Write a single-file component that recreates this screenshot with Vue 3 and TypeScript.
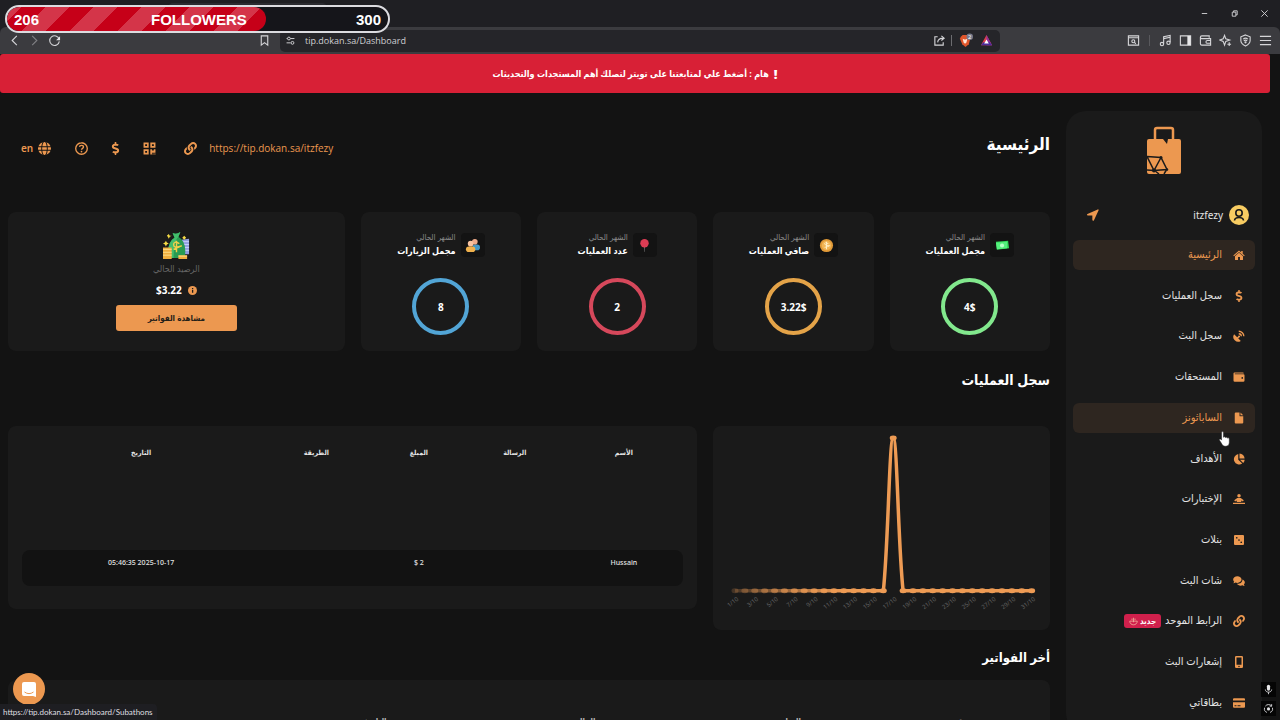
<script setup lang="ts">
interface Icon {
  box: string
  fill?: string
  line?: string
  width?: number
}

const icons: Record<string, Icon> = {
  link: {
    box: '0 0 512 512',
    fill: 'M326.612 185.391c59.747 59.809 58.927 155.698.36 214.59-.11.12-.24.25-.36.37l-67.2 67.2c-59.27 59.27-155.699 59.262-214.96 0-59.27-59.26-59.27-155.7 0-214.96l37.106-37.106c9.84-9.84 26.786-3.3 27.294 10.606.648 17.722 3.826 35.527 9.69 52.721 1.986 5.822.567 12.262-3.783 16.612l-13.087 13.087c-28.026 28.026-28.905 73.66-1.155 101.96 28.024 28.579 74.086 28.749 102.325.51l67.2-67.19c28.191-28.191 28.073-73.757 0-101.83-3.701-3.694-7.429-6.564-10.341-8.569a16.037 16.037 0 0 1-6.947-12.606c-.396-10.567 3.348-21.456 11.698-29.806l21.054-21.055c5.521-5.521 14.182-6.199 20.584-1.731a152.482 152.482 0 0 1 20.522 17.197zM467.547 44.449c-59.261-59.262-155.69-59.27-214.96 0l-67.2 67.2c-.12.12-.25.25-.36.37-58.566 58.892-59.387 154.781.36 214.59a152.454 152.454 0 0 0 20.521 17.196c6.402 4.468 15.064 3.789 20.584-1.731l21.054-21.055c8.35-8.35 12.094-19.239 11.698-29.806a16.037 16.037 0 0 0-6.947-12.606c-2.912-2.005-6.64-4.875-10.341-8.569-28.073-28.073-28.191-73.639 0-101.83l67.2-67.19c28.239-28.239 74.3-28.069 102.325.51 27.75 28.3 26.872 73.934-1.155 101.96l-13.087 13.087c-4.35 4.35-5.769 10.79-3.783 16.612 5.864 17.194 9.042 34.999 9.69 52.721.509 13.906 17.454 20.446 27.294 10.606l37.106-37.106c59.271-59.259 59.271-155.699.001-214.959z',
  },
  dollar: {
    box: '-112 0 512 512',
    fill: 'M209.2 233.4l-108-31.6C88.7 198.2 80 186.5 80 173.5c0-16.3 13.2-29.5 29.5-29.5h66.3c12.2 0 24.2 3.7 34.2 10.5 6.1 4.1 14.3 3.1 19.5-2l34.8-34c7.1-6.9 6.1-18.4-1.8-24.5C238 74.8 207.4 64.1 176 64V16c0-8.8-7.2-16-16-16h-32c-8.8 0-16 7.2-16 16v48h-2.5C45.8 64-5.4 118.7.5 183.6c4.2 46.1 39.4 83.6 83.8 96.6l102.5 30c12.5 3.7 21.2 15.3 21.2 28.3 0 16.3-13.2 29.5-29.5 29.5h-66.3C100 368 88 364.3 78 357.5c-6.1-4.1-14.3-3.1-19.5 2l-34.8 34c-7.1 6.9-6.1 18.4 1.8 24.5 24.5 19.2 55.1 29.9 86.5 30v48c0 8.8 7.2 16 16 16h32c8.8 0 16-7.2 16-16v-48.2c46.6-.9 90.3-28.6 105.7-72.7 21.5-61.6-14.6-124.8-72.5-141.7z',
  },
  home: {
    box: '0 0 24 24',
    fill: 'M12 7.6 4 14.3V21a1 1 0 0 0 1 1h5v-6h4v6h5a1 1 0 0 0 1-1v-6.7zM.6 12.8 12 3.2l4.4 3.7V4.2h3v5.2l4 3.4-1.4 1.7L12 6 2 14.5z',
  },
  dish: {
    box: '0 0 24 24',
    fill: 'M2.2 8.6a9.6 9.6 0 0 0 13.4 13.2l-5.2-5.2 1.7-1.7a2 2 0 1 0-2-2l-1.7 1.7z',
    line: 'M11.5 7.5a5.4 5.4 0 0 1 5.2 5.2M11.5 2.5a10.3 10.3 0 0 1 10.2 10.2',
    width: 2.6,
  },
  wallet: {
    box: '0 0 24 24',
    fill: 'M3 3h17a1.5 1.5 0 0 1 1.5 1.5V5H3.5v1.4H21A2 2 0 0 1 23 8.5v10.5a2.5 2.5 0 0 1-2.5 2.5h-17A2.5 2.5 0 0 1 1 19V5a2 2 0 0 1 2-2zm15.500 9.200a1.700 1.700 0 1 0 0 3.400 1.700 1.700 0 0 0 0-3.400z',
  },
  file: {
    box: '0 0 24 24',
    fill: 'M5.500 1H13v6.500a1 1 0 0 0 1 1h6.500V21a2 2 0 0 1-2 2h-13a2 2 0 0 1-2-2V3a2 2 0 0 1 2-2zM15 1l5.500 5.700H15z',
  },
  pie: {
    box: '0 0 24 24',
    fill: 'M10.500 2.200v11.300l7.900 7.600A10.500 10.500 0 1 1 10.500 2.200zM13 1a10.300 10.300 0 0 1 10.200 10.200H13zM14 13.500h9.400a10.400 10.400 0 0 1-3 6.500z',
  },
  poll: {
    box: '0 0 24 24',
    fill: 'M12 2a3.500 3.500 0 1 1 0 7 3.500 3.500 0 0 1 0-7zM8.500 10h7l6 4.600-1.600 2.400-3.400-2v3H7.500v-3l-3.400 2-1.600-2.400zM0 19.500h24v2.700H0z',
  },
  dice: {
    box: '0 0 24 24',
    fill: 'M4 2h16a2 2 0 0 1 2 2v16a2 2 0 0 1-2 2H4a2 2 0 0 1-2-2V4a2 2 0 0 1 2-2zm3.500 3.800a1.700 1.700 0 1 0 0 3.400 1.700 1.700 0 0 0 0-3.400zM12 10.300a1.700 1.700 0 1 0 0 3.400 1.700 1.700 0 0 0 0-3.400zm4.500 4.500a1.700 1.700 0 1 0 0 3.400 1.700 1.700 0 0 0 0-3.400z',
  },
  chat: {
    box: '0 0 24 24',
    fill: 'M8.700 2.500c4.700 0 8.400 3 8.400 6.700s-3.700 6.700-8.400 6.700c-1.300 0-2.500-.2-3.600-.7-1.200.8-2.700 1.500-4.700 1.500 1-1 1.700-2.200 1.900-3.200A6.200 6.200 0 0 1 .3 9.200c0-3.700 3.700-6.700 8.400-6.700zM18.800 8.800c2.900.9 4.900 3.200 4.900 5.900 0 1.700-.8 3.200-2 4.300.2 1 .9 2.200 1.900 3.200-2 0-3.500-.7-4.700-1.500-1.100.5-2.300.7-3.600.7-3.300 0-6.100-1.500-7.500-3.700 6.400.3 11.300-3.600 11-8.900z',
  },
  phone: {
    box: '0 0 24 24',
    fill: 'M6.500 0h11a2.500 2.500 0 0 1 2.500 2.500v19a2.500 2.500 0 0 1-2.500 2.500h-11A2.500 2.500 0 0 1 4 21.500v-19A2.500 2.500 0 0 1 6.500 0zM7 3v14.500h10V3zm5 16.300a1.500 1.500 0 1 0 0 3 1.500 1.500 0 0 0 0-3z',
  },
  card: {
    box: '0 0 24 24',
    fill: 'M2 2.500h20a2 2 0 0 1 2 2V7H0V4.500a2 2 0 0 1 2-2zM0 10.500h24v9a2 2 0 0 1-2 2H2a2 2 0 0 1-2-2zm3 6v2.200h4v-2.200zm6 0v2.200h6v-2.200z',
  },
  arrow: {
    box: '0 0 24 24',
    fill: 'M21.500.800.900 9.900c-1.500.8-1 3 .7 3h9.100v9.200c0 1.700 2.300 2.200 3 .7L23.200 2.500c.4-1.200-.6-2.100-1.700-1.700z',
  },
  globe: {
    box: '0 0 24 24',
    fill: 'M8 8c.5-4.300 2-8 4-8s3.500 3.700 4 8zm9.800 0c-.4-3-1.100-5.500-2.300-7.400A12 12 0 0 1 23.200 8zM6.200 8H.8A12 12 0 0 1 8.500.6C7.300 2.500 6.600 5 6.200 8zM.3 9.500h5.800a34 34 0 0 0 0 5H.3a12 12 0 0 1 0-5zm7.500 0h8.400a34 34 0 0 1 0 5H7.800a34 34 0 0 1 0-5zm10.100 0h5.800a12 12 0 0 1 0 5h-5.800a34 34 0 0 0 0-5zM8 16h8c-.5 4.300-2 8-4 8s-3.500-3.700-4-8zm-1.800 0c.4 3 1.100 5.500 2.300 7.400A12 12 0 0 1 .8 16zm11.600 0h5.400a12 12 0 0 1-7.700 7.400c1.200-1.900 1.900-4.400 2.300-7.400z',
  },
  help: {
    box: '0 0 24 24',
    fill: 'M12 16a1.600 1.600 0 1 1 0 3.200 1.600 1.600 0 0 1 0-3.200z',
    line: 'M12 1.300a10.700 10.700 0 1 1 0 21.400 10.700 10.700 0 0 1 0-21.400M8.300 9c.2-2 1.500-2.900 3.700-2.900s3.700 1.200 3.700 3.100c0 2.500-3.500 2.500-3.700 5',
    width: 2.5,
  },
  qr: {
    box: '0 0 24 24',
    fill: 'M1 1h9.500v9.500H1zm3 3v3.500h3.500V4zM13.500 1H23v9.500h-9.500zm3 3v3.500H20V4zM1 13.500h9.500V23H1zm3 3V20h3.500v-3.500zM13.500 13.500h3v2h3.500v-2h3v6.300h-6.500V23h-3zM17.500 21h2v2h-2zm3.500 0h2v2h-2z',
  },
}

const menu = [
  { label: 'الرئيسية', icon: 'home', active: true },
  { label: 'سجل العمليات', icon: 'dollar' },
  { label: 'سجل البث', icon: 'dish' },
  { label: 'المستحقات', icon: 'wallet' },
  { label: 'الساباثونز', icon: 'file', active: true },
  { label: 'الأهداف', icon: 'pie' },
  { label: 'الإختبارات', icon: 'poll' },
  { label: 'بنلات', icon: 'dice' },
  { label: 'شات البث', icon: 'chat' },
  { label: 'الرابط الموحد', icon: 'link', badge: 'جديد' },
  { label: 'إشعارات البث', icon: 'phone' },
  { label: 'بطاقاتي', icon: 'card' },
]

const stats = [
  { title: 'مجمل العمليات', value: '4$', kind: 'green' },
  { title: 'صافي العمليات', value: '3.22$', kind: 'gold' },
  { title: 'عدد العمليات', value: '2', kind: 'red' },
  { title: 'مجمل الزيارات', value: '8', kind: 'blue' },
]

const columns = ['الأسم', 'الرسالة', 'المبلغ', 'الطريقة', 'التاريخ']
const row = ['Hussain', '', '$ 2', '', '05:46:35 2025-10-17']
const invoiceColumns = ['رقم', 'المبلغ', 'الحالة', 'التاريخ', 'خيارات']

const step = 9.9
const points = Array.from({ length: 31 }, (_, i) => ({
  day: i + 1,
  x: 22 + i * step,
  y: i === 16 ? 12 : 165,
}))
const left = points[15].x
const peak = points[16].x
const right = points[17].x
const curve = `M${points[0].x} 165H${left}C${left + 5} 120 ${peak - 4} 12 ${peak} 12S${right - 5} 120 ${right} 165H${points[30].x}`
</script>

<template>
  <div class="window">
    <div class="browser">
      <div class="tabs">
        <div class="tab"><button aria-label="Close tab"><svg viewBox="0 0 10 10"><path d="M2 2l6 6M8 2l-6 6" /></svg></button></div>
        <button class="new-tab" aria-label="New tab"><svg viewBox="0 0 10 10"><path d="M5 1v8M1 5h8" /></svg></button>
        <div class="controls">
          <button aria-label="Minimize"><svg viewBox="0 0 10 10"><path d="M2 5h6" /></svg></button>
          <button aria-label="Restore"><svg viewBox="0 0 10 10"><path d="M2.500 3.500h4v4.500h-4zM4 3.500V2h4v4.500H6.500" /></svg></button>
          <button aria-label="Close"><svg viewBox="0 0 10 10"><path d="M1.500 1.500l7 7M8.500 1.500l-7 7" /></svg></button>
        </div>
      </div>
      <div class="toolbar">
        <div class="nav">
          <button aria-label="Back"><svg viewBox="0 0 14 14"><path d="M9.500 2l-5 5 5 5" /></svg></button>
          <button aria-label="Forward" class="dim"><svg viewBox="0 0 14 14"><path d="M4.500 2l5 5-5 5" /></svg></button>
          <button aria-label="Reload"><svg viewBox="0 0 14 14"><path d="M12 5.500A5.200 5.200 0 1 0 12.200 8" /><path class="solid" d="M13 2.500v4.300H8.700z" /></svg></button>
        </div>
        <button class="bookmark" aria-label="Bookmark"><svg viewBox="0 0 14 14"><path d="M3.500 2h7v10L7 9.300 3.500 12z" /></svg></button>
        <div class="address">
          <svg viewBox="0 0 14 14"><path d="M2 4.500h1M7 4.500h5M2 10h5" /><circle cx="5" cy="4.500" r="1.800" /><circle cx="9.500" cy="10" r="1.800" /></svg>
          <input type="text" value="tip.dokan.sa/Dashboard" aria-label="Address" />
          <div class="address-end">
            <svg viewBox="0 0 14 14"><path d="M5 3H2v9h9V9M5 9c.3-3 2-4.500 6-4.500M9 2l3 2.500L9 7" /></svg>
            <i class="bar"></i>
            <svg viewBox="0 0 16 16" class="shield">
              <path class="lion" d="M3 4l2-2h5l2 2 1 2-1.500 6L8 15l-3.500-3L2 6z" />
              <path class="mane" d="M5 6l2 1 1 0 2-1-1 4-1.500 1.500L6 10z" />
              <circle cx="12.500" cy="4" r="3.500" /><text x="12.500" y="6">2</text>
            </svg>
            <svg viewBox="0 0 14 14" class="bat"><path class="a" d="M7 1L1 12h12z" /><path class="b" d="M7 12h6L7 1z" /><path class="c" d="M1 12h12l-2.500-3h-7z" /><path class="d" d="M7 6l2.500 4.300h-5z" /></svg>
          </div>
        </div>
        <div class="extras">
          <svg viewBox="0 0 14 14"><path d="M1.500 2h11v10h-11zM1.500 4h11" /><circle cx="6.800" cy="7.800" r="1.600" /><path d="M8 9l1.500 1.500" /></svg>
          <i class="bar dark"></i>
          <svg viewBox="0 0 14 14"><path d="M5 10.500V3l7-1.500V9M5 5l7-1.500" /><circle cx="3.200" cy="10.800" r="1.800" /><circle cx="10.200" cy="9.500" r="1.800" /></svg>
          <svg viewBox="0 0 14 14"><path d="M1.500 2h11v10h-11z" /><path class="solid" d="M9 2h3.500v10H9z" /></svg>
          <svg viewBox="0 0 14 14"><path d="M11 4V2H3a1.500 1.500 0 0 0 0 3h9.500v7H3a1.500 1.500 0 0 1-1.500-1.500v-7M12.500 7H9a1.500 1.500 0 0 0 0 3h3.500" /></svg>
          <svg viewBox="0 0 14 14"><path d="M6 1.500l1.300 3.700L11.500 6.500 7.300 8 6 12 4.500 8 1 6.500l3.500-1.300zM11 9v4M9 11h4" /></svg>
          <svg viewBox="0 0 14 14"><path d="M7 1l5 2v4c0 3-2 4.500-5 6-3-1.500-5-3-5-6V3zM4.500 5.500q2.500-2 5 0M5.200 7.300q1.800-1.300 3.600 0" /><circle cx="7" cy="9" r=".6" /></svg>
          <svg viewBox="0 0 14 14" class="menu"><path d="M1 2.500h12M1 7h12M1 11.500h12" /></svg>
        </div>
      </div>
    </div>

    <div class="page" dir="rtl">
      <a href="#" class="banner"><b>!</b> هام : أضغط علي لمتابعتنا على تويتر لتصلك أهم المستجدات والتحديثات</a>
      <div class="layout">
        <aside class="sidebar">
          <svg class="logo" viewBox="0 0 34 48">
            <path d="M8 14V4a2 2 0 0 1 2-2h14a2 2 0 0 1 2 2v10" class="handle" />
            <path d="M2 13h14l4 5 1-5h11a2 2 0 0 1 2 2v31a2 2 0 0 1-2 2H2a2 2 0 0 1-2-2V15a2 2 0 0 1 2-2z" />
            <path class="net" d="M0 30.500l14 1 6 12-13 1zM14 31.500L7 44.500 0 44M7 44l5 4M20 43l-3 5" />
            <circle cx="14" cy="31.500" r="1.500" /><circle cx="7" cy="44.500" r="2" /><circle cx="20" cy="43.500" r="1.200" />
          </svg>
          <div class="profile">
            <svg class="avatar" viewBox="0 0 20 20"><circle cx="10" cy="10" r="10" /><circle class="o" cx="10" cy="8" r="3.200" /><path class="o" d="M5.500 15.500c.5-4 8.500-4 9 0" /></svg>
            <span>itzfezy</span>
            <svg class="icon" viewBox="0 0 24 24"><path :d="icons.arrow.fill" /></svg>
          </div>
          <nav>
            <a v-for="item in menu" :key="item.label" href="#" :class="{ active: item.active }">
              <svg class="icon" :viewBox="icons[item.icon].box">
                <path fill-rule="evenodd" :d="icons[item.icon].fill" />
                <path v-if="icons[item.icon].line" class="line" :d="icons[item.icon].line" :stroke-width="icons[item.icon].width" />
              </svg>
              <span>{{ item.label }}</span>
              <em v-if="item.badge">{{ item.badge }}<svg viewBox="0 0 12 12"><path d="M1 5.500c0 6.500 10 6.500 10 0zM4 4V2M6 7V1M8 4V2" /></svg></em>
            </a>
          </nav>
        </aside>

        <main>
          <header>
            <h1>الرئيسية</h1>
            <div class="tools" dir="ltr">
              <button class="lang">en <svg class="icon" viewBox="0 0 24 24"><path :d="icons.globe.fill" /></svg></button>
              <button aria-label="Help"><svg class="icon" viewBox="0 0 24 24"><path :d="icons.help.fill" /><path class="line" :d="icons.help.line" :stroke-width="icons.help.width" /></svg></button>
              <button aria-label="Currency"><svg class="icon" :viewBox="icons.dollar.box"><path :d="icons.dollar.fill" /></svg></button>
              <button aria-label="QR code"><svg class="icon" viewBox="0 0 24 24"><path fill-rule="evenodd" :d="icons.qr.fill" /></svg></button>
              <a href="#"><svg class="icon" viewBox="0 0 512 512"><path :d="icons.link.fill" /></svg><span>https://tip.dokan.sa/itzfezy</span></a>
            </div>
          </header>

          <section class="cards">
            <article v-for="s in stats" :key="s.title" class="card stat" :class="s.kind">
              <div class="stat-head">
                <div class="tile">
                  <svg v-if="s.kind === 'green'" viewBox="0 0 16 16"><path fill="#2fd657" d="M1 4l13-1 1 8-13 1.500z" /><path fill="#54ef7c" d="M1 5l12-1v7l-11 1z" /><circle cx="7.500" cy="8" r="2.200" fill="#b4ffc5" /></svg>
                  <svg v-else-if="s.kind === 'gold'" viewBox="0 0 16 16"><circle cx="8" cy="8" r="7" fill="#e19a38" /><circle cx="8" cy="8" r="5" fill="#f2b555" /><path d="M10 6q-4-2-4 0t4 2-4 2M8 4v8" fill="none" stroke="#fff0c9" /></svg>
                  <svg v-else-if="s.kind === 'red'" viewBox="0 0 16 16"><path d="M7.500 9h1l-.3 6h-.4z" fill="#777" /><circle cx="8" cy="5.500" r="4.500" fill="#dc3c54" /></svg>
                  <svg v-else viewBox="0 0 16 16"><rect x="8" y="7" width="8" height="6" rx="3" fill="#4398c6" /><circle cx="10.500" cy="4" r="3" fill="#efab8a" /><circle cx="6" cy="6" r="3" fill="#f8c3a0" /><rect x="1" y="9" width="10" height="6" rx="3" fill="#f0b14d" /></svg>
                </div>
                <div>
                  <p>الشهر الحالي</p>
                  <h3>{{ s.title }}</h3>
                </div>
              </div>
              <div class="ring" dir="ltr">{{ s.value }}</div>
            </article>
            <article class="card balance">
              <svg viewBox="0 0 28 28">
                <path fill="#8f9de0" d="M19 8l8-1v16h-8z" /><path stroke="#c9d2fa" d="M21 10h6M21 13h6M21 16h6M21 19h6" />
                <path fill="#289b52" d="M10 1q4 2 8-1l-2 5q8 5 7 17 0 5-3 5H9q-5 0-4-6Q6 9 12 6z" /><path fill="#42bd6c" d="M10 1q4 2 8-1l-2 5q-5 4-5 22H9q-5 0-4-6Q6 9 12 6z" />
                <path d="M17 12q-6-3-6 1t6 2-6 3M14 9v12" fill="none" stroke="#f0cf4a" stroke-width="1.500" />
                <path fill="#f0ad3d" d="M0 16h9v12H0zM16 24h9v4h-9z" /><path stroke="#ffe08a" d="M0 18h9M0 21h9M0 24h9M16 25h9" />
                <path fill="#f5da45" d="M3 9l1 2 2 1-2 1-1 2-1-2-2-1 2-1zM6 2l1 2 2 0-2 1-1 2-1-2-1-1zM22 4l1 1 1 1-1 1-1 1-1-1-1-1z" />
              </svg>
              <p>الرصيد الحالي</p>
              <strong dir="ltr">$3.22 <svg viewBox="0 0 12 12"><circle cx="6" cy="6" r="6" /><path d="M5.300 5H7v4H5.300zM5.300 2.500H7v1.400H5.300z" /></svg></strong>
              <button>مشاهدة الفواتير</button>
            </article>
          </section>

          <h2>سجل العمليات</h2>

          <section class="cards logs">
            <article class="card chart" dir="ltr">
              <svg viewBox="0 0 337 204">
                <defs>
                  <linearGradient id="fade" gradientUnits="userSpaceOnUse" x1="14" y1="0" x2="130" y2="0">
                    <stop offset="0" stop-color="#ee9b54" stop-opacity=".15" />
                    <stop offset="1" stop-color="#ee9b54" />
                  </linearGradient>
                </defs>
                <path :d="curve" fill="none" stroke="url(#fade)" stroke-width="3.500" />
                <ellipse v-for="p in points" :key="p.day" :cx="p.x" :cy="p.y" rx="3.500" ry="2.500" fill="url(#fade)" />
                <template v-for="p in points" :key="p.day">
                  <text v-if="p.day % 2" text-anchor="end" :transform="`translate(${p.x + 4} 174) rotate(-38)`">{{ p.day }}/10</text>
                </template>
              </svg>
            </article>
            <article class="card ledger">
              <table>
                <colgroup><col class="c1" /><col class="c2" /><col class="c3" /><col class="c4" /><col class="c5" /></colgroup>
                <thead><tr><th v-for="c in columns" :key="c">{{ c }}</th></tr></thead>
                <tbody><tr><td v-for="(c, i) in row" :key="i"><span dir="ltr">{{ c }}</span></td></tr></tbody>
              </table>
            </article>
          </section>

          <h2 class="invoices-title">أخر الفواتير</h2>
          <section class="card invoices">
            <table>
              <colgroup><col class="n1" /><col class="n2" /><col class="n3" /><col class="n4" /><col class="n5" /></colgroup>
              <thead><tr><th v-for="c in invoiceColumns" :key="c">{{ c }}</th></tr></thead>
            </table>
          </section>
        </main>
      </div>
    </div>

    <div class="followers">
      <div class="progress"></div>
      <span>206</span><span class="caption">FOLLOWERS</span><span>300</span>
    </div>
    <button class="messenger" aria-label="Chat"><svg viewBox="0 0 16 16"><path d="M3 1h10a2 2 0 0 1 2 2v13l-3-1H3a2 2 0 0 1-2-2V3a2 2 0 0 1 2-2z" /><path class="smile" d="M3.500 11q4.500 3.300 9 0" /></svg></button>
    <div class="status">https://tip.dokan.sa/Dashboard/Subathons</div>
    <svg class="cursor" viewBox="0 0 14 18"><path d="M3 1.500c0-1.500 2.200-1.500 2.200 0V7c.5-1 2.300-.8 2.300.4.600-.9 2.200-.6 2.200.600.700-.7 2.300-.3 2.300 1V13c0 3-1.800 4.500-4.500 4.500-3 0-3.500-1.500-5-4L.6 10.500c-.6-1.300.8-2 1.700-1l.7.8z" /></svg>
    <div class="floaters">
      <button aria-label="Microphone"><svg viewBox="0 0 14 14"><rect class="solid" x="5" y="1" width="4" height="7.500" rx="2" /><path d="M3 7c0 4.500 8 4.500 8 0M7 10.500V13" /></svg></button>
      <button aria-label="Record"><svg viewBox="0 0 14 14"><path d="M3 4A5 5 0 0 1 11 4M12 6a5 5 0 0 1-3 6M2 6a5 5 0 0 0 3 6M11 1.500V4H8.500" /><circle class="solid" cx="7" cy="7.500" r="2" /></svg></button>
    </div>
  </div>
</template>

<style>
html,
body {
  background: #131313;
}
body {
  overflow: hidden;
}
</style>

<style scoped>
.window {
  position: relative;
  height: 100vh;
  overflow: hidden;
  color: #e4e4e4;
  font-family: "Noto Sans", "DejaVu Sans Condensed", "DejaVu Sans", sans-serif;
  font-size: 10px;
  background: #131313;
}
* {
  box-sizing: border-box;
}
button {
  padding: 0;
  border: 0;
  background: none;
  color: inherit;
  font: inherit;
  display: flex;
  align-items: center;
  justify-content: center;
}
a {
  color: inherit;
  text-decoration: none;
}
h1, h2, h3, p {
  margin: 0;
}

.browser {
  background: #1f1f23;
}
.browser svg,
.floaters svg {
  width: 13px;
  height: 13px;
  flex: none;
  fill: none;
  stroke: #d5d5d8;
  stroke-width: 1.2;
}
.browser .solid,
.floaters .solid {
  fill: #e6e6e8;
  stroke: none;
}
.tabs {
  display: flex;
  height: 27px;
  padding: 3px 11px 0 168px;
}
.tab {
  width: 159px;
  height: 21px;
  padding-right: 6px;
  display: flex;
  justify-content: flex-end;
  background: #2b2b30;
  border-radius: 5px;
}
.browser .tabs svg {
  width: 9px;
  height: 9px;
  stroke-width: 1;
}
.new-tab {
  height: 21px;
  margin-left: 10px;
}
.controls {
  display: flex;
  gap: 21px;
  margin-left: auto;
  height: 21px;
}
.toolbar {
  display: flex;
  align-items: center;
  height: 27px;
  padding: 0 8px;
  background: #3b3b3f;
  border-radius: 6px 6px 0 0;
}
.nav {
  display: flex;
  gap: 7px;
}
.dim {
  opacity: .45;
}
.bookmark {
  margin-left: 197px;
}
.address {
  display: flex;
  align-items: center;
  flex: 1;
  height: 22px;
  margin-left: 9px;
  padding: 0 7px 0 5px;
  background: #252529;
  border-radius: 5px;
}
.address > svg {
  width: 11px;
  height: 11px;
}
.address input {
  flex: 1;
  min-width: 0;
  margin-left: 9px;
  padding: 0;
  border: 0;
  background: none;
  color: #cfcfd2;
  font: 9px/18px "Open Sans", sans-serif;
}
.address-end {
  display: flex;
  align-items: center;
  gap: 5px;
}
.bar {
  width: 1px;
  height: 11px;
  background: #6c6c70;
}
.browser .shield {
  width: 15px;
  height: 15px;
  margin-left: 1px;
  stroke: none;
}
.lion { fill: #e0552b; }
.mane { fill: #ffe6d8; }
.shield circle { fill: #777a8c; }
.shield text {
  fill: #fff;
  font-size: 6px;
  text-anchor: middle;
}
.browser .bat {
  margin-left: 2px;
  stroke: none;
}
.bat .a { fill: #e0404a; }
.bat .b { fill: #8b2f9c; }
.bat .c { fill: #4a2c9a; }
.bat .d { fill: #fff; }
.extras {
  display: flex;
  align-items: center;
  gap: 7px;
  margin-left: 127px;
}
.extras .dark {
  background: #59595d;
  margin: 0 2px;
}

.page {
  margin-right: 10px;
}
.banner {
  display: flex;
  align-items: center;
  justify-content: center;
  gap: 5px;
  height: 39px;
  background: #d82036;
  border-radius: 3px;
  color: #fff;
  font-size: 9px;
  font-weight: 700;
}
.banner b {
  font-size: 13px;
}
.layout {
  display: flex;
  align-items: flex-start;
  gap: 16px;
  padding: 18px 8px 0;
}

.sidebar {
  flex: none;
  width: 196px;
  min-height: 620px;
  padding: 15px 7px;
  background: #1a1a1a;
  border-radius: 20px;
}
.logo {
  display: block;
  width: 34px;
  height: 48px;
  margin: 0 auto;
  fill: #ec9850;
}
.logo .handle {
  fill: none;
  stroke: #ec9850;
  stroke-width: 2.5;
}
.logo .net {
  fill: none;
  stroke: #1a1a1a;
  stroke-width: 1.5;
}
.logo circle {
  fill: #1a1a1a;
}
.profile {
  display: flex;
  align-items: center;
  height: 20px;
  gap: 6px;
  margin: 31px 0 15px;
  padding: 0 6px 0 14px;
}
.profile span {
  flex: 1;
}
.avatar {
  width: 20px;
  height: 20px;
  fill: #f7cc62;
}
.avatar .o {
  fill: none;
  stroke: #1a1a1a;
  stroke-width: 1.6;
}
.icon {
  width: 12px;
  height: 12px;
  flex: none;
  fill: #ec9850;
}
.icon .line {
  fill: none;
  stroke: #ec9850;
}
nav {
  display: flex;
  flex-direction: column;
  justify-content: space-between;
  gap: 10px;
  min-height: 478px;
}
nav a {
  display: flex;
  align-items: center;
  gap: 11px;
  height: 30px;
  padding: 0 10px;
  border-radius: 6px;
  font-size: 11px;
  line-height: 20px;
}
nav a span {
  margin-bottom: 2px;
}
nav .active {
  background: #2e2620;
  color: #ec9850;
}
nav em {
  display: flex;
  align-items: center;
  gap: 2px;
  height: 14px;
  margin-right: -7px;
  padding: 0 5px;
  background: #d0204c;
  border-radius: 3px;
  color: #fff;
  font-size: 8px;
  font-style: normal;
  font-weight: 700;
  line-height: 14px;
}
nav em svg {
  width: 9px;
  height: 9px;
  fill: none;
  stroke: #f3b9a0;
}

main {
  flex: 1;
  min-width: 0;
}
header {
  display: flex;
  align-items: center;
  justify-content: space-between;
  height: 74px;
  margin-bottom: 27px;
}
h1 {
  margin-bottom: 8px;
  color: #fff;
  font-size: 17px;
  line-height: 28px;
}
.tools {
  display: flex;
  align-items: center;
  gap: 21px;
  padding-left: 13px;
  color: #ec9850;
}
.tools .icon {
  width: 13px;
  height: 13px;
}
.tools .lang {
  gap: 5px;
  margin-right: 3px;
  font-size: 10px;
  font-weight: 600;
}
.tools a {
  display: flex;
  align-items: center;
  gap: 12px;
  margin-left: 7px;
  font-family: "Open Sans", sans-serif;
  font-size: 10px;
}
.cards {
  display: grid;
  grid-template-columns: repeat(6, 1fr);
  gap: 16px;
}
.card {
  min-width: 0;
  background: #1a1a1a;
  border-radius: 8px;
}
.stat {
  min-height: 139px;
  padding-top: 19px;
}
.stat-head {
  display: flex;
  align-items: center;
  justify-content: center;
  gap: 5px;
  margin-bottom: 19px;
}
.tile {
  display: grid;
  place-items: center;
  width: 24px;
  height: 24px;
  background: #131313;
  border-radius: 4px;
}
.tile svg {
  width: 15px;
  height: 15px;
}
.stat p {
  color: #8b8b8b;
  font-size: 8px;
  line-height: 12px;
}
.stat h3 {
  color: #fff;
  font-size: 9px;
  line-height: 16px;
}
.ring {
  display: grid;
  place-items: center;
  width: 57px;
  height: 57px;
  margin: 0 auto;
  border: 4px solid;
  border-radius: 50%;
  color: #fff;
  font-weight: 700;
  font-size: 10px;
}
.green .ring { border-color: #82e88d; }
.gold .ring { border-color: #e4a348; }
.red .ring { border-color: #d6485b; }
.blue .ring { border-color: #52a5d6; }
.balance {
  grid-column: span 2;
  display: flex;
  flex-direction: column;
  align-items: center;
  padding-top: 20px;
}
.balance > svg {
  width: 27px;
  height: 27px;
}
.balance p {
  margin-top: 2px;
  color: #666;
  font-size: 9px;
  line-height: 16px;
}
.balance strong {
  display: flex;
  align-items: center;
  gap: 6px;
  margin-top: 5px;
  color: #fff;
  font-size: 10px;
  line-height: 16px;
}
.balance strong svg {
  width: 9px;
  height: 9px;
  fill: #ec9850;
}
.balance strong path {
  fill: #1a1a1a;
}
.balance button {
  width: 121px;
  height: 26px;
  margin-top: 7px;
  padding-bottom: 2px;
  background: #ec9850;
  border-radius: 3px;
  color: #242018;
  font-size: 8px;
  font-weight: 700;
}
h2 {
  margin: 17px 0 34px;
  color: #fff;
  font-size: 14px;
  line-height: 24px;
}
.logs {
  align-items: start;
}
.chart {
  grid-column: span 2;
}
.chart svg {
  display: block;
  width: 100%;
}
.chart text {
  fill: #626262;
  font-size: 6px;
}
.ledger {
  grid-column: span 4;
  padding: 14px 14px 23px;
}
table {
  width: 100%;
  border-collapse: separate;
  border-spacing: 0;
  table-layout: fixed;
  font-size: 7px;
}
.c1 { width: 18%; }
.c2 { width: 15%; }
.c3 { width: 14%; }
.c4 { width: 17%; }
.c5 { width: 36%; }
.n1 { width: 16%; }
.n2 { width: 17%; }
.n3 { width: 23%; }
.n4 { width: 18%; }
.n5 { width: 26%; }
th, td {
  padding: 5px 0 0;
  text-align: center;
  vertical-align: top;
  line-height: 16px;
}
.ledger th {
  height: 110px;
}
.ledger td {
  height: 36px;
  background: #121212;
  font-weight: 500;
}
td:first-child { border-radius: 0 8px 8px 0; }
td:last-child { border-radius: 8px 0 0 8px; }
.invoices-title {
  margin: 15px 0 11px;
  font-size: 13px;
}
.invoices {
  min-height: 60px;
  padding: 28px 8px 0;
}
.invoices th {
  color: #b8b8b8;
  font-size: 8px;
}

.followers {
  position: absolute;
  top: 5px;
  left: 5px;
  display: flex;
  align-items: center;
  justify-content: space-between;
  width: 385px;
  height: 28px;
  padding: 0 7px;
  overflow: hidden;
  border: 2px solid #dcdce0;
  border-radius: 14px;
  background: #15151a;
  color: #fff;
  font: 700 15px "Liberation Sans", sans-serif;
}
.followers span {
  position: relative;
}
.followers .caption {
  margin: 0 0 0 50px;
  padding-right: 50px;
}
.followers .caption {
  margin-left: 0;
  padding-right: 0;
  flex: 1;
  padding-left: 112px;
}
.progress {
  position: absolute;
  inset: 0 auto 0 0;
  width: 68%;
  border-radius: 12px;
  background: repeating-linear-gradient(135deg, #d43549 0 10px, #c60018 10px 27px, #d43549 27px 34px);
}
.messenger {
  position: absolute;
  left: 13px;
  bottom: 15px;
  width: 32px;
  height: 32px;
  border-radius: 50%;
  background: #ec9850;
}
.messenger svg {
  width: 16px;
  height: 16px;
  fill: #fff;
}
.messenger .smile {
  fill: none;
  stroke: #ec9850;
}
.status {
  position: absolute;
  left: 0;
  bottom: 0;
  padding: 0 4px 0 3px;
  background: #1e1e22;
  border-radius: 0 4px 0 0;
  color: #dedee0;
  font: 8px/16px Lato, sans-serif;
}
.cursor {
  position: absolute;
  left: 1219px;
  top: 431px;
  width: 12px;
  height: 16px;
  fill: #fff;
  stroke: #222;
  stroke-width: .6;
}
.floaters {
  position: absolute;
  right: 4px;
  bottom: 4px;
  display: grid;
  gap: 4px;
}
.floaters button {
  width: 15px;
  height: 15px;
  background: #050505;
}
.floaters svg {
  width: 11px;
  height: 11px;
}
</style>
